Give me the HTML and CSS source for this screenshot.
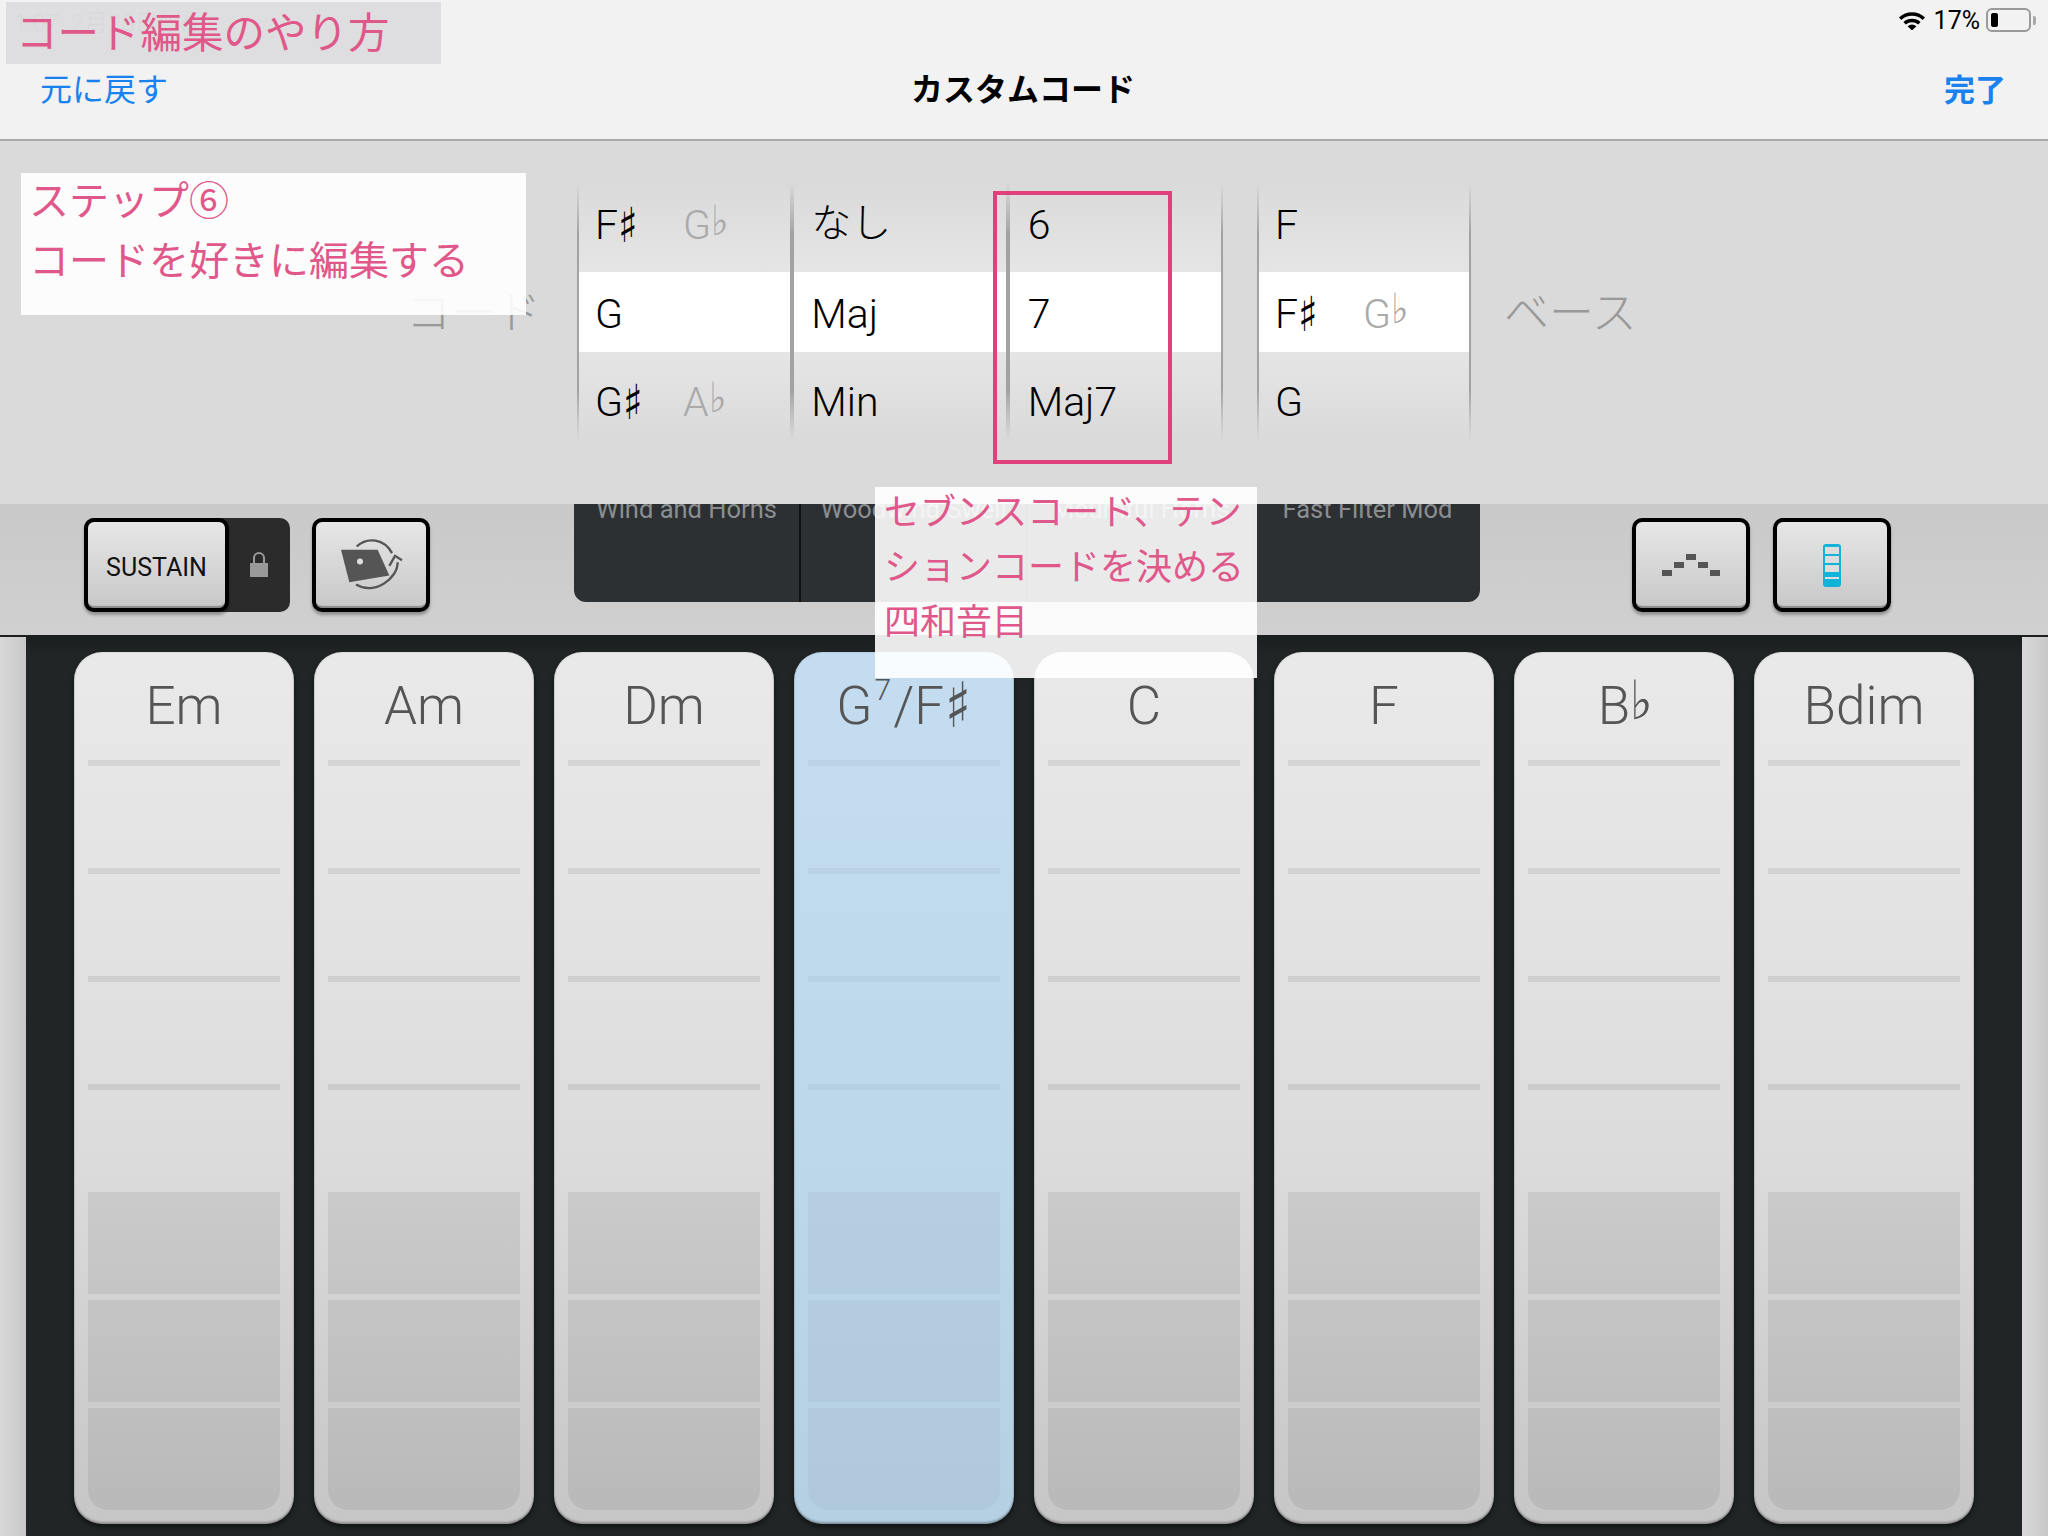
FILE: index.html
```html
<!DOCTYPE html>
<html lang="ja">
<head>
    <meta charset="UTF-8">
    <title>カスタムコード</title>
    <link rel="stylesheet" href="styles.css">
</head>
<body>
    <header class="topbar">
        <div class="status">
            <span class="clock">1:07 &nbsp;2月25日(火)</span>
            <div class="status-right">
                <svg class="wifi" viewBox="0 0 28 20" width="28" height="20">
                    <path d="M1 7.5a19 19 0 0 1 26 0L24.6 10a15.6 15.6 0 0 0-21.2 0z" fill="#000"/>
                    <path d="M5.4 12a13 13 0 0 1 17.2 0l-2.4 2.5a9.4 9.4 0 0 0-12.4 0z" fill="#000"/>
                    <path d="M9.6 16.2a7 7 0 0 1 8.8 0L14 20.4z" fill="#000"/>
                </svg>
                <span class="percent">17%</span>
                <div class="battery"><div class="battery-fill"></div></div>
                <div class="battery-nub"></div>
            </div>
        </div>
        <nav class="nav">
            <a class="nav-left">元に戻す</a>
            <h1 class="nav-title">カスタムコード</h1>
            <a class="nav-right">完了</a>
        </nav>
    </header>

    <section class="picker">
        <div class="side-label first">コード</div>
        <div class="wheel wide">
            <div class="col">
                <div class="cell"><span class="root">F<i class="sharp">♯</i></span><span class="alt">G<i class="flat">♭</i></span></div>
                <div class="cell"><span class="root">G</span></div>
                <div class="cell"><span class="root">G<i class="sharp">♯</i></span><span class="alt">A<i class="flat">♭</i></span></div>
            </div>
            <div class="col">
                <div class="cell jp">なし</div>
                <div class="cell">Maj</div>
                <div class="cell">Min</div>
            </div>
            <div class="col">
                <div class="cell">6</div>
                <div class="cell">7</div>
                <div class="cell">Maj7</div>
            </div>
        </div>
        <div class="wheel narrow">
            <div class="col">
                <div class="cell"><span class="root">F</span></div>
                <div class="cell"><span class="root">F<i class="sharp">♯</i></span><span class="alt">G<i class="flat">♭</i></span></div>
                <div class="cell"><span class="root">G</span></div>
            </div>
        </div>
        <div class="side-label second">ベース</div>
    </section>

    <section class="toolbar">
        <div class="sustain">
            <button class="tool-btn sustain-btn">SUSTAIN</button>
            <svg class="lock" viewBox="0 0 18 26" width="18" height="26">
                <path d="M4 12V7a5 5 0 0 1 10 0v5" fill="none" stroke="#999" stroke-width="2"/>
                <rect x="0" y="12" width="18" height="14" fill="#999"/>
            </svg>
        </div>
        <button class="tool-btn square">
            <svg viewBox="800 80 210 170" width="70" height="57">
                <path d="M815 118L925 118L960 195L840 215Z" fill="#555"/>
                <circle cx="872" cy="153" r="9" fill="#ddd"/>
                <path d="M862 108C895 78 945 85 968 128M985 155C985 205 915 255 860 222" fill="none" stroke="#555" stroke-width="7"/>
                <path d="M960 166L977 136L998 149" fill="none" stroke="#555" stroke-width="7"/>
            </svg>
        </button>
        <div class="presets">
            <div class="preset">Wind and Horns</div>
            <div class="preset">Woodwind Swell</div>
            <div class="preset">Mournful Horns</div>
            <div class="preset">Fast Filter Mod</div>
        </div>
        <button class="tool-btn square arp">
            <svg viewBox="0 0 58 22" width="58" height="22">
                <rect x="0" y="16" width="10" height="6" fill="#555"/>
                <rect x="12" y="8" width="10" height="6" fill="#555"/>
                <rect x="24" y="0" width="10" height="6" fill="#555"/>
                <rect x="36" y="8" width="10" height="6" fill="#555"/>
                <rect x="48" y="16" width="10" height="6" fill="#555"/>
            </svg>
        </button>
        <button class="tool-btn square meter-btn">
            <svg viewBox="0 0 18 43" width="18" height="43">
                <rect x="0" y="0" width="18" height="43" rx="3" fill="#12b3d8"/>
                <rect x="2" y="3" width="14" height="7" fill="#ddd"/>
                <rect x="2" y="12" width="14" height="7" fill="#ddd"/>
                <rect x="2" y="21" width="14" height="7" fill="#ddd"/>
                <rect x="2" y="33" width="14" height="2" fill="#ddd"/>
            </svg>
        </button>
    </section>

    <main class="keys">
        <div class="strip"></div>
        <div class="key-row">
            <div class="key">
                <div class="key-name">Em</div>
                <div class="fret"></div><div class="fret"></div><div class="fret"></div><div class="fret"></div>
                <div class="pads"><div class="pad"></div><div class="pad"></div><div class="pad"></div></div>
            </div>
            <div class="key">
                <div class="key-name">Am</div>
                <div class="fret"></div><div class="fret"></div><div class="fret"></div><div class="fret"></div>
                <div class="pads"><div class="pad"></div><div class="pad"></div><div class="pad"></div></div>
            </div>
            <div class="key">
                <div class="key-name">Dm</div>
                <div class="fret"></div><div class="fret"></div><div class="fret"></div><div class="fret"></div>
                <div class="pads"><div class="pad"></div><div class="pad"></div><div class="pad"></div></div>
            </div>
            <div class="key active">
                <div class="key-name">G<sup>7</sup>/F<i class="sharp">♯</i></div>
                <div class="fret"></div><div class="fret"></div><div class="fret"></div><div class="fret"></div>
                <div class="pads"><div class="pad"></div><div class="pad"></div><div class="pad"></div></div>
            </div>
            <div class="key">
                <div class="key-name">C</div>
                <div class="fret"></div><div class="fret"></div><div class="fret"></div><div class="fret"></div>
                <div class="pads"><div class="pad"></div><div class="pad"></div><div class="pad"></div></div>
            </div>
            <div class="key">
                <div class="key-name">F</div>
                <div class="fret"></div><div class="fret"></div><div class="fret"></div><div class="fret"></div>
                <div class="pads"><div class="pad"></div><div class="pad"></div><div class="pad"></div></div>
            </div>
            <div class="key">
                <div class="key-name">B<i class="flat">♭</i></div>
                <div class="fret"></div><div class="fret"></div><div class="fret"></div><div class="fret"></div>
                <div class="pads"><div class="pad"></div><div class="pad"></div><div class="pad"></div></div>
            </div>
            <div class="key">
                <div class="key-name">Bdim</div>
                <div class="fret"></div><div class="fret"></div><div class="fret"></div><div class="fret"></div>
                <div class="pads"><div class="pad"></div><div class="pad"></div><div class="pad"></div></div>
            </div>
        </div>
        <div class="strip"></div>
    </main>

    <!-- annotations laid over the screenshot -->
    <div class="note note-title"><p>コード編集のやり方</p></div>
    <div class="note note-step"><p>ステップ⑥<br>コードを好きに編集する</p></div>
    <div class="note note-tension"><p>セブンスコード、テン<br>ションコードを決める<br>四和音目</p></div>
    <div class="red-box"></div>
</body>
</html>
```

FILE: styles.css
```css
* {
    box-sizing: border-box;
}

html, body {
    margin: 0;
    padding: 0;
}

body {
    position: relative;
    width: 2048px;
    height: 1536px;
    overflow: hidden;
    font-family: Roboto, "Noto Sans CJK JP", sans-serif;
    font-weight: 300;
    background-color: #212526;
}

.topbar {
    height: 141px;
    background-color: #f2f2f2;
    border-bottom: 2px solid #a8a8a8;
}

.status {
    height: 40px;
    display: flex;
    justify-content: space-between;
    align-items: center;
    padding: 0 12px 0 14px;
}

.clock {
    font-size: 24px;
    color: #c6c6c6;
}

.status-right {
    display: flex;
    align-items: center;
}

.wifi {
    margin-right: 8px;
}

.percent {
    font-size: 25px;
    font-weight: 400;
    color: #000;
    margin-right: 6px;
}

.battery {
    width: 45px;
    height: 24px;
    padding: 3px;
    border: 2px solid #999;
    border-radius: 6px;
}

.battery-fill {
    width: 7px;
    height: 100%;
    background-color: #000;
    border-radius: 2px;
}

.battery-nub {
    width: 3px;
    height: 9px;
    margin-left: 2px;
    background-color: #aaa;
    border-radius: 0 2px 2px 0;
}

.nav {
    display: grid;
    grid-template-columns: 1fr auto 1fr;
    align-items: center;
    height: 98px;
    padding: 0 42px 4px 40px;
}

.nav-left {
    font-family: "Noto Sans CJK JP", sans-serif;
    font-size: 32px;
    font-weight: 400;
    color: #1a82ee;
}

.nav-title {
    margin: 0;
    font-family: "Noto Sans CJK JP", sans-serif;
    font-size: 32px;
    font-weight: 700;
    color: #000;
}

.nav-right {
    justify-self: end;
    font-family: "Noto Sans CJK JP", sans-serif;
    font-size: 31px;
    font-weight: 700;
    color: #1a82ee;
}

.picker {
    height: 363px;
    padding-top: 42px;
    display: flex;
    align-items: flex-start;
    background-color: #dadada;
}

.side-label {
    height: 257px;
    padding-bottom: 4px;
    display: flex;
    align-items: center;
    font-family: "Noto Sans CJK JP", sans-serif;
    font-size: 45px;
    color: #999;
}

.side-label.first {
    width: 577px;
    justify-content: flex-end;
    padding-right: 36px;
}

.side-label.second {
    margin-left: 33px;
}

.wheel {
    display: flex;
    height: 257px;
    background:
        linear-gradient(#fff, #fff) 0 89px / 100% 80px no-repeat,
        linear-gradient(#dadada, #e5e5e5 34%, #e5e5e5 66%, #dadada);
}

.wheel.wide {
    width: 646px;
}

.wheel.narrow {
    width: 214px;
    margin-left: 34px;
}

.col {
    position: relative;
    flex: 1;
    display: grid;
    grid-template-rows: 89px 80px 88px;
    border-left: 2px solid transparent;
    border-image: linear-gradient(rgba(150,150,150,0), #a2a2a2 20%, #a2a2a2 80%, rgba(150,150,150,0)) 1;
}

.col + .col {
    border-left-width: 4px;
}

.col:last-child {
    border-right: 2px solid transparent;
}

.wide .col:last-child {
    border-right-width: 0;
}

.wheel.wide::after {
    content: "";
    width: 2px;
    background: linear-gradient(rgba(150,150,150,0), #a2a2a2 20%, #a2a2a2 80%, rgba(150,150,150,0));
}

.cell {
    display: flex;
    align-items: center;
    padding-left: 16px;
    padding-top: 3px;
    font-size: 41px;
    line-height: 50px;
    color: #000;
}

.col + .col .cell {
    padding-left: 17px;
}

.col + .col + .col .cell {
    padding-left: 18px;
}

.cell:first-child {
    padding-top: 0;
    padding-bottom: 5px;
}

.cell:last-child {
    padding-top: 12px;
}

.cell.jp {
    font-size: 40px;
    padding-bottom: 7px;
}

.cell .root {
    width: 88px;
    white-space: nowrap;
}

.cell .alt {
    color: #aaa;
    white-space: nowrap;
}

/* accidentals: the CJK fallback glyphs are too wide, so name a narrow one */
.sharp, .flat {
    display: inline-block;
    font-family: "DejaVu Sans", sans-serif;
    font-style: normal;
    font-weight: 400;
    line-height: 0;
    transform-origin: left center;
}

.sharp {
    width: .52em;
    transform: scale(1, 1.18);
}

.flat {
    width: .38em;
    transform: scale(.9, 1.02);
    vertical-align: .1em;
}

.toolbar {
    height: 131px;
    padding-left: 84px;
    display: flex;
    align-items: flex-start;
    background: linear-gradient(#c9c9c9, #d0d0d0);
}

.tool-btn {
    padding: 0;
    border: 4px solid #000;
    border-radius: 10px;
    background: linear-gradient(#e6e6e6, #c8c8c8);
    box-shadow: inset 0 -3px 1px -1px #8a8a8a, 0 3px 3px rgba(0,0,0,.3);
}

.sustain {
    width: 206px;
    height: 94px;
    margin-top: 14px;
    display: flex;
    align-items: center;
    background-color: #2b2b2b;
    border-radius: 10px;
}

.sustain-btn {
    width: 145px;
    height: 94px;
    padding-top: 5px;
    font-family: Roboto, sans-serif;
    font-size: 25px;
    font-weight: 400;
    color: #111;
}

.lock {
    margin-left: 21px;
    margin-top: -2px;
}

.square {
    width: 118px;
    height: 94px;
    margin-top: 14px;
    display: flex;
    align-items: center;
    justify-content: center;
}

.sustain + .square {
    margin-left: 22px;
}

.presets {
    width: 906px;
    height: 98px;
    margin-left: 144px;
    display: flex;
    overflow: hidden;
    background-color: #2d3033;
    border-radius: 0 0 12px 12px;
}

.preset {
    flex: 1;
    height: 100%;
    border-left: 2px solid #111;
    line-height: 10px;
    text-align: center;
    font-size: 25.5px;
    font-weight: 400;
    color: #8b8e90;
}

.preset:first-child {
    border-left: 0;
}

.arp {
    margin-left: 152px;
}

.meter-btn {
    margin-left: 23px;
}

.keys {
    height: 901px;
    padding-top: 2px;
    display: flex;
    justify-content: space-between;
    background: linear-gradient(#1b1d1e, #212526 20px);
}

.strip {
    width: 26px;
    background: linear-gradient(90deg, #d8d8d8, #c8c8c8);
}

.key-row {
    display: flex;
    gap: 20px;
    padding-top: 15px;
}

.key {
    width: 220px;
    height: 872px;
    padding: 0 14px;
    border-radius: 28px;
    background: linear-gradient(#e9e9e9, #e5e5e5 20%, #dcdcdc 57%, #c6c6c6);
    box-shadow: inset 0 -2px 2px rgba(0,0,0,.25), inset 0 0 2px rgba(0,0,0,.2), 0 3px 5px rgba(0,0,0,.5);
}

.key.active {
    background: linear-gradient(#c3dcf0, #c2dbef 20%, #bdd7eb 57%, #b6d0e3);
}

.key-name {
    height: 108px;
    margin: 0 -14px;
    padding-top: 14px;
    text-align: center;
    font-size: 53px;
    line-height: 80px;
    color: #555;
    white-space: nowrap;
}

.key-name sup {
    font-size: 30px;
    line-height: 0;
    vertical-align: 24px;
    margin: 0 2px;
}

.fret {
    height: 108px;
    border-top: 6px solid rgba(0,0,0,.08);
}

.active .fret {
    border-top-color: rgba(0,0,0,.04);
}

.pads {
    display: flex;
    flex-direction: column;
    gap: 6px;
}

.pad {
    height: 102px;
    background-color: rgba(0,0,0,.065);
}

.active .pad {
    background-color: rgba(0,0,0,.035);
}

.pad:last-child {
    border-radius: 0 0 20px 20px;
}

.note {
    position: absolute;
    font-family: "Noto Sans CJK JP", sans-serif;
    font-weight: 400;
    color: #e0588a;
}

.note p {
    margin: -5px 0 0;
}

.note-title {
    left: 6px;
    top: 2px;
    width: 435px;
    height: 62px;
    padding-left: 10px;
    font-size: 41.5px;
    line-height: 66px;
    background-color: rgba(218,219,222,.85);
}

.note-step {
    left: 21px;
    top: 173px;
    width: 505px;
    height: 142px;
    padding-left: 8px;
    font-size: 40px;
    line-height: 60px;
    background-color: rgba(255,255,255,.9);
}

.note-tension {
    left: 875px;
    top: 487px;
    width: 382px;
    height: 191px;
    padding-left: 9px;
    font-size: 36px;
    line-height: 55px;
    background-color: rgba(255,255,255,.9);
}

.red-box {
    position: absolute;
    left: 993px;
    top: 191px;
    width: 179px;
    height: 273px;
    border: 4px solid #e0407c;
}
```
